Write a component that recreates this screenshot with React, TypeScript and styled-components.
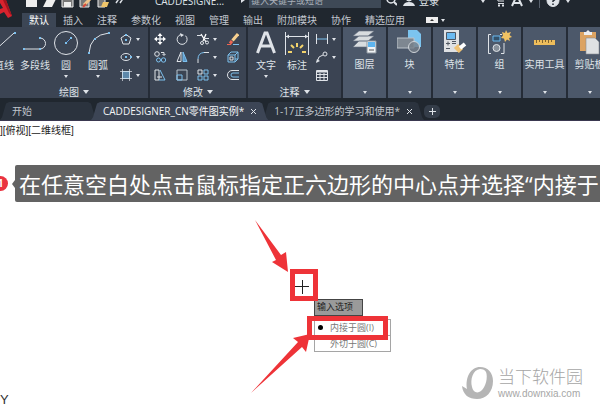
import React from "react";
import styled, { createGlobalStyle, css } from "styled-components";

const ink = "#dfe3e8";
const blue = "#7cc0ee";
const red = "#ee3338";

const GlobalStyle = createGlobalStyle`
  * { box-sizing: border-box; }
  html, body { margin: 0; background: #fff; }
  body { overflow: hidden; font-family: "Open Sans", "Noto Sans CJK SC", sans-serif; font-size: 10px; line-height: 14px; }
  button, input { font: inherit; color: inherit; background: none; border: 0; padding: 0; margin: 0; }
`;

const Page = styled.div`
  display: flex;
  flex-direction: column;
  min-height: 100vh;
  overflow: hidden;
  white-space: nowrap;
`;

const Header = styled.header`
  position: relative;
  background: #20272f;
  color: ${ink};
`;

const Logo = styled.svg`
  position: absolute;
  left: 0;
  top: 0;
  width: 14px;
  height: 19px;
`;

const TitleBar = styled.div`
  display: flex;
  align-items: flex-end;
  height: 13px;
  overflow: hidden;
`;

const TitleRow = styled.div`
  display: flex;
  flex: 1;
  align-items: center;
  height: 24px;
  flex-shrink: 0;
`;

const QuickAccess = styled.div`
  display: flex;
  gap: 5px;
  margin-left: 25px;
  width: 130px;
`;

const PlainButton = styled.button`
  display: flex;
  align-items: center;
  flex-shrink: 0;
`;

const DocName = styled.span`
  width: 86px;
`;

const SearchBox = styled.input`
  width: 132px;
  height: 14px;
  margin: 0 5px 0 4px;
  padding: 0 2px;
  background: #3e4956;
  font-size: 9px;
  &::placeholder { color: #a9b0b9; opacity: 1; }
`;

const Account = styled.div`
  display: flex;
  align-items: center;
  gap: 4px;
  margin: 0 10px 0 6px;
  width: 82px;
  & > :last-child { margin-left: auto; }
`;

const TitleTools = styled.div`
  display: flex;
  align-items: center;
  gap: 6px;
`;

const Divider = styled.span`
  width: 1px;
  height: 14px;
  background: #59626e;
`;

const MenuTabs = styled.nav`
  display: flex;
  height: 14px;
  padding-left: 22px;
`;

const MenuTab = styled.button<{ $active?: boolean }>`
  flex-shrink: 0;
  padding: 0 7px;
  line-height: 14px;
  color: #c3c8cf;
  ${(p) => p.$active && css`background: #3c4655; color: #fff;`}
`;

const RibbonToggle = styled(PlainButton)`
  margin-left: 14px;
  gap: 3px;
`;

const Ribbon = styled.div`
  display: flex;
  gap: 2px;
  height: 71px;
  background: #252c37;
`;

const Panel = styled.section<{ $width: number }>`
  display: flex;
  flex-direction: column;
  flex: 0 0 ${(p) => p.$width}px;
  min-width: 0;
  background: #3b4453;
`;

const PanelBody = styled.div<{ $end?: boolean }>`
  display: flex;
  justify-content: ${(p) => (p.$end ? "flex-end" : "flex-start")};
  height: 59px;
  padding: 3px 6px 0 4px;
`;

const PanelTitle = styled.button`
  display: flex;
  align-items: center;
  justify-content: center;
  gap: 4px;
  height: 12px;
  line-height: 12px;
`;

const Tool = styled.button<{ $width: number }>`
  display: flex;
  flex-direction: column;
  align-items: center;
  flex: 0 0 ${(p) => p.$width}px;
  line-height: 14px;
`;

const ToolLabel = styled.span`
  margin: 2px 0 3px;
`;

const SmallTools = styled.div<{ $columns: string; $left: number }>`
  display: grid;
  grid-template-columns: ${(p) => p.$columns};
  grid-auto-rows: 18px;
  margin-left: ${(p) => p.$left}px;
  flex-shrink: 0;
`;

const SmallTool = styled.button`
  display: flex;
  align-items: center;
  gap: 4px;
`;

const FoldedPanel = styled.button`
  display: flex;
  flex-direction: column;
  align-items: center;
  flex: 0 0 43px;
  min-width: 0;
  padding: 3px 0 4px;
  background: #4c586a;
  line-height: 14px;
  & > :last-child { margin-top: auto; }
`;

const FileTabs = styled.nav`
  display: flex;
  height: 23px;
  padding-top: 4px;
  border-bottom: 1px solid #3a3850;
`;

const FileTab = styled.div<{ $active?: boolean }>`
  position: relative;
  display: flex;
  align-items: center;
  gap: 6px;
  flex-shrink: 0;
  margin-right: -6px;
  padding: 0 11px 0 12px;
  color: ${(p) => (p.$active ? "#f2f4f6" : "#c0c5cc")};
  background: ${(p) => (p.$active ? "#3c4555" : "#2b333e")};
  z-index: ${(p) => (p.$active ? 1 : 0)};
  clip-path: polygon(0 100%, 2px 85%, 6px 8%, 9px 0, calc(100% - 9px) 0, calc(100% - 6px) 8%, calc(100% - 2px) 85%, 100% 100%);
`;

const HomeTab = styled(FileTab)`
  width: 97px;
`;

const AddTab = styled(PlainButton)`
  justify-content: center;
  align-self: center;
  width: 16px;
  height: 13px;
  margin-left: 6px;
  border-radius: 5px;
  background: #343d49;
`;

const Canvas = styled.main`
  position: relative;
  flex: 1;
  background: #fff;
`;

const ViewLabel = styled.div`
  padding-top: 3px;
  color: #222;
  font-family: "Liberation Sans", "Noto Sans CJK SC", sans-serif;
`;

const StepNote = styled.div`
  display: flex;
  align-items: center;
  margin-top: 27px;
`;

const StepNumber = styled.span`
  flex: 0 0 15px;
  height: 15px;
  margin-left: -7px;
  border-radius: 8px;
  background: #ea3340;
  color: #fff;
  font-weight: 700;
  line-height: 15px;
  text-align: center;
`;

const Pointer = styled.svg`
  flex: 0 0 3px;
  height: 8px;
  margin-left: 4px;
`;

const StepText = styled.p`
  flex: 1;
  height: 37px;
  margin: 0;
  padding-left: 4px;
  overflow: hidden;
  border-radius: 2px 0 0 2px;
  background: #636363;
  color: #fff;
  font-size: 22px;
  line-height: 38px;
`;

const Overlay = styled.svg`
  position: absolute;
  left: 250px;
  top: 95px;
  width: 70px;
  height: 180px;
`;

const Prompt = styled.div`
  position: absolute;
  left: 314px;
  top: 178px;
  width: 77px;
  color: #777;
  font-size: 9px;
`;

const PromptTitle = styled.div`
  width: 49px;
  height: 17px;
  margin-bottom: 3px;
  padding-left: 2px;
  border: 1px solid #444;
  background: #9a9a9a;
  color: #222;
  line-height: 14px;
`;

const Option = styled.button`
  display: flex;
  align-items: center;
  gap: 7px;
  width: 100%;
  height: 17px;
  padding-left: 3px;
  border: 1px solid #a5a5a5;
  & + & { margin-top: -1px; }
`;

const Dot = styled.span<{ $on?: boolean }>`
  width: 5px;
  height: 5px;
  border-radius: 3px;
  background: ${(p) => (p.$on ? "#000" : "transparent")};
`;

const Frame = styled.div<{ $x: number; $y: number; $w: number; $h: number }>`
  position: absolute;
  left: ${(p) => p.$x}px;
  top: ${(p) => p.$y}px;
  width: ${(p) => p.$w}px;
  height: ${(p) => p.$h}px;
  border: 5px solid ${red};
  pointer-events: none;
`;

const AxisName = styled.span`
  position: absolute;
  left: 0;
  bottom: 8px;
  color: #333;
  font-family: "Liberation Sans", sans-serif;
  font-size: 13px;
`;

const Watermark = styled.a`
  position: absolute;
  right: 17px;
  bottom: 15px;
  display: flex;
  align-items: center;
  gap: 4px;
  color: #a6a6a6;
  text-decoration: none;
`;

const SiteName = styled.span`
  display: block;
  font-size: 17px;
  font-weight: 300;
  line-height: 20px;
`;

const SiteAddress = styled.span`
  display: block;
  font-family: "Liberation Sans", sans-serif;
  line-height: 13px;
`;

type IconProps = { w?: number; h?: number; children: React.ReactNode };
const Icon = ({ w = 12, h = 12, children }: IconProps) => (
  <svg width={w} height={h} viewBox={`0 0 ${w} ${h}`} fill="none" stroke={ink} strokeWidth="1" aria-hidden="true">
    {children}
  </svg>
);

const Caret = ({ big }: { big?: boolean }) =>
  big ? (
    <Icon w={6} h={4}><path d="M0 0H6L3 4Z" fill={ink} stroke="none" /></Icon>
  ) : (
    <Icon w={4} h={3}><path d="M0 0H4L2 3Z" fill={ink} stroke="none" /></Icon>
  );

const Node = ({ x, y }: { x: number; y: number }) => (
  <rect x={x - 1} y={y - 1} width="2" height="2" fill={blue} stroke="none" />
);

const quick = [
  { name: "新建", art: <path d="M1 0H9L12 3V13H1Z" fill="#eee" stroke="none" /> },
  { name: "打开", art: <path d="M0 13L4 5H13L9 13Z" fill="#eee" stroke="none" /> },
  { name: "保存", art: <><path d="M1 1H12V13H1Z" fill="#777" stroke="#eee" /><path d="M3 8H10V13H3Z" fill="#eee" stroke="none" /></> },
  { name: "另存为", art: <><path d="M1 1H10V13H1Z" fill="#777" stroke="#eee" /><path d="M5 11L11 5" stroke="#f1c48a" strokeWidth="3" /><path d="M4 13L7 10" stroke="#d84a3a" strokeWidth="2" /></> },
  { name: "从移动设备打开", art: <><path d="M1 1H8V13H1Z" fill="#777" stroke="#eee" /><path d="M4 13L6 8H12L10 13Z" fill="#efc56a" stroke="none" /></> },
];

const small = {
  polygon: <><path d="M6 1.5L11 5L9 11H3L1 5Z" /><Node x={6} y={2} /><Node x={6} y={7} /></>,
  ellipse: <><ellipse cx="6" cy="6" rx="5" ry="3.5" /><Node x={6} y={6} /><Node x={11} y={6} /></>,
  hatch: <><rect x="2.5" y="2.5" width="7" height="7" fill="#5c88ab" stroke={blue} /><path d="M2.5 0V12M9.5 0V12M0 2.5H12M0 9.5H12" strokeWidth=".7" /></>,
  move: <><path d="M6 1V11M1 6H11" strokeWidth="1.5" /><path d="M6 0L8.500 3H3.500ZM6 12L3.500 9H8.500ZM0 6L3 3.500V8.500ZM12 6L9 8.500V3.500Z" fill="#fff" stroke="none" /></>,
  rotate: <><path d="M9.500 2.700A5 5 0 1 1 5 1.500" /><path d="M4 0L8 2L5 4Z" fill={ink} stroke="none" /></>,
  trim: <><path d="M4 1L9 9M9 1L6 8" stroke="#fff" strokeWidth="1.3" /><circle cx="5" cy="10" r="1.500" /><circle cx="10" cy="9.500" r="1.500" /><path d="M0 2.500H5M8 5.500H12" /></>,
  erase: <><path d="M5.500 7.500L11 1" stroke="#f6cf8f" strokeWidth="3" /><path d="M3 10.500L5 8" stroke="#ee6653" strokeWidth="3" /><path d="M0 11.500H4" stroke="#ee6653" /><path d="M6 11.500H12" stroke={blue} /></>,
  copy: <><circle cx="3" cy="3" r="2.300" /><circle cx="4.500" cy="9" r="2" stroke={blue} /><circle cx="9.500" cy="9" r="2.200" stroke={blue} /><path d="M7 1.500H10V4M8.500 3L10 4.500L11.500 3" /></>,
  mirror: <><path d="M5 1V10.500H1Z" /><path d="M7 1V10.500H11Z" fill="#5a96c6" stroke={blue} /></>,
  fillet: <><path d="M1 12V8" /><path d="M1 8Q1 2 7 1.500" stroke={blue} /><path d="M7 1.500H12" /></>,
  explode: <><path d="M1 4H8V11H1ZM4 1H11V8H8M1 4L4 1M8 4L11 1M8 11L11 8" stroke={blue} /><path d="M3 6H6V9H3Z" /></>,
  stretch: <><path d="M1 1H5V11H1Z" /><path d="M6 1L11 11H5" stroke={blue} /><path d="M3 8H8" /></>,
  scale: <><path d="M1 1H11V11H1Z" stroke="#b7c2cc" /><path d="M1 6H6V11H1Z" stroke={blue} /></>,
  array: <><path d="M1 1H5V5H1Z" /><path d="M7 1H11V5H7ZM1 7H5V11H1ZM7 7H11V11H7Z" stroke={blue} /></>,
  offset: <><path d="M12 1.500H5A4 4 0 0 0 5 10.500H12" /><path d="M12 4H6A2 2 0 0 0 6 8H12" stroke={blue} /></>,
  linear: <><path d="M.5 1V11M11.500 1V11" /><path d="M1 6H11" stroke={blue} /></>,
  leader: <><path d="M1 11L3 6L7 4" /><circle cx="9" cy="3" r="2" /><path d="M0 12L1 8L4 10Z" fill={ink} stroke="none" /></>,
  table: <><path d="M.5 1.500H11.500V11.500H.5ZM.5 5.500H11.500M.5 8.500H11.500M4 4V11M8 4V11" /><path d="M1 2.500H11" strokeWidth="2" /></>,
};

type SmallKey = keyof typeof small;
const Small = ({ icon, name, menu }: { icon: SmallKey; name: string; menu?: boolean }) => (
  <SmallTool aria-label={name}>
    <Icon>{small[icon]}</Icon>
    {menu && <Caret />}
  </SmallTool>
);

const folded = [
  { name: "图层", art: <><path d="M7 1H22L16 6H1ZM7 6H22L16 11H1ZM7 11H22L16 17H1Z" fill="#d8dcdf" stroke="#667180" strokeWidth=".6" /><path d="M15 11H24V23H15Z" fill="#f0f2f4" stroke="#8d969f" /><path d="M16 12H23V17H16Z" fill="#5eb4ee" stroke="none" /><path d="M17 20H22" stroke="#555" /></> },
  { name: "块", art: <><path d="M11 0H20L24 4V17H11Z" fill="#7cc4ef" stroke="none" /><path d="M0 8H17V18H0Z" fill="#7e8791" stroke="#bcc3ca" /><circle cx="17" cy="17" r="5.500" fill="#76808a" fillOpacity=".8" stroke="#cfd4d9" /></> },
  { name: "特性", art: <><path d="M2 0H17V22H2Z" fill="#dfe1e3" stroke="none" /><path d="M4.500 2.500H13.500V9.500H4.500Z" fill="#6bbaf0" stroke="#4b5665" /><path d="M4 13.500H8M6 11.500V15.500M4 18.500H8M10 13.500H14M10 11.500H14" stroke="#505862" /><path d="M14 16L19 21" stroke="#efc274" strokeWidth="6" /><path d="M18 18L23 14" stroke="#fff" strokeWidth="4" /></> },
  { name: "组", art: <><path d="M4 4.500H1.500V23.500H4M13 4.500H15M14 23.500H17V13" /><path d="M6 6H13V11H6Z" stroke="#68b8ee" fill="#34516a" /><circle cx="9.500" cy="18" r="3.500" fill="#88919b" /><path d="M19 0L20.500 3L24 2L22.500 5L25 7L22 8L23 11L20 9.500L18 12L17 8.500L14 8L16 5.500L15 2L18 3Z" fill="#f2c363" stroke="none" /></> },
  { name: "实用工具", art: <><path d="M2 10H23V15H2Z" fill="#eebd5b" stroke="none" /><path d="M4.500 10V13M7.500 10V12M10.500 10V13M13.500 10V12M16.500 10V13M19.500 10V12" stroke="#80642f" /></> },
  { name: "剪贴板", art: <><path d="M3 2H19V21H3Z" fill="#dca362" stroke="none" /><path d="M7 2H9L11 0L13 2H15V5H7Z" fill="#eceef0" stroke="none" /><path d="M9 8H18L22 12V24H9Z" fill="#dfe1e3" stroke="#8a8f96" strokeWidth=".6" /></> },
];

const menus = ["插入", "注释", "参数化", "视图", "管理", "输出", "附加模块", "协作", "精选应用"];

const Close = () => (
  <PlainButton aria-label="关闭">
    <Icon w={7} h={7}><path d="M1 1L6 6M6 1L1 6" /></Icon>
  </PlainButton>
);

export default function App() {
  return (
    <Page lang="zh-CN">
      <GlobalStyle />
      <Header>
        <TitleBar>
          <TitleRow>
            <QuickAccess>
              {quick.map((q) => (
                <PlainButton key={q.name} aria-label={q.name}><Icon w={13} h={14}>{q.art}</Icon></PlainButton>
              ))}
              <PlainButton aria-label="更多"><Icon w={8} h={14}><path d="M1 4L3 6L1 9M5 4L7 6L5 9" strokeWidth="1.500" /></Icon></PlainButton>
            </QuickAccess>
            <DocName>CADDESIGNE...</DocName>
            <Icon w={4} h={8}><path d="M0 0L4 3L0 6Z" fill={ink} stroke="none" /></Icon>
            <SearchBox aria-label="搜索" placeholder="键入关键字或短语" />
            <PlainButton aria-label="查找"><Icon w={11} h={14}><circle cx="5" cy="5" r="4" strokeWidth="1.500" /><path d="M8 8L11 11" strokeWidth="2" /></Icon></PlainButton>
            <Account>
              <Icon w={12} h={14}><circle cx="6" cy="4" r="3" fill={ink} /><path d="M0 12Q1 8 6 8T12 12Z" fill={ink} stroke="none" /></Icon>
              <PlainButton>登录</PlainButton>
              <Caret />
            </Account>
            <TitleTools>
              <PlainButton aria-label="商店"><Icon w={10} h={14}><path d="M0 1H2L3 7H9M2 3.500H9M3 9.500H9" /><path d="M3 11.500H5M7 11.500H9" strokeWidth="2" /></Icon></PlainButton>
              <PlainButton aria-label="应用"><Icon w={12} h={14}><path d="M6 1L1 12M6 1L11 12M3 9H9" strokeWidth="2" /></Icon></PlainButton>
              <Caret />
              <Divider />
              <PlainButton aria-label="帮助"><Icon w={14} h={14}><circle cx="7" cy="6.500" r="6" fill="#dfe3e8" /><path d="M5 5Q5 3 7 3T9 5Q9 6 7 7V8M7 9.500V11" stroke="#20272f" strokeWidth="1.500" /></Icon></PlainButton>
              <Caret />
            </TitleTools>
          </TitleRow>
        </TitleBar>
        <MenuTabs>
          <MenuTab $active>默认</MenuTab>
          {menus.map((m) => <MenuTab key={m}>{m}</MenuTab>)}
          <RibbonToggle aria-label="功能区显示">
            <Icon w={12} h={8}><path d="M0 1H12V7H0Z" fill="#eee" stroke="none" /><path d="M4 5H8L6 3Z" fill="#333" stroke="none" /></Icon>
            <Caret />
          </RibbonToggle>
        </MenuTabs>
        <Logo viewBox="0 0 14 19" aria-hidden="true">
          <path d="M0 0H6L12 16L8 18L4 12L0 14V9L3 8L0 3Z" fill="#d9232e" />
          <path d="M3 0L9 13L12 16L6 0Z" fill="#a3151f" />
        </Logo>
        <Ribbon>
          <Panel $width={148}>
            <PanelBody $end>
              <Tool $width={30}>
                <Icon w={26} h={26}><path d="M1 23L23 3" /><Node x={2} y={22} /><Node x={24} y={3} /></Icon>
                <ToolLabel>直线</ToolLabel>
              </Tool>
              <Tool $width={32}>
                <Icon w={26} h={26}><path d="M2 19H18A5.500 5.500 0 0 0 18 8" /><Node x={2} y={19} /><Node x={18} y={8} /><Node x={18} y={19} /></Icon>
                <ToolLabel>多段线</ToolLabel>
              </Tool>
              <Tool $width={30}>
                <Icon w={26} h={26}><circle cx="13" cy="13" r="11.500" /><path d="M13 13L18 8" stroke="#5b9be0" /><Node x={13} y={13} /><Node x={18} y={8} /></Icon>
                <ToolLabel>圆</ToolLabel>
                <Caret />
              </Tool>
              <Tool $width={34}>
                <Icon w={26} h={26}><path d="M4 23Q5 5 24 3" /><Node x={4} y={23} /><Node x={10} y={9} /><Node x={24} y={3} /></Icon>
                <ToolLabel>圆弧</ToolLabel>
                <Caret />
              </Tool>
              <SmallTools $columns="22px" $left={5}>
                <Small icon="polygon" name="多边形" menu />
                <Small icon="ellipse" name="椭圆" menu />
                <Small icon="hatch" name="图案填充" menu />
              </SmallTools>
            </PanelBody>
            <PanelTitle>绘图 <Caret big /></PanelTitle>
          </Panel>
          <Panel $width={96}>
            <PanelBody>
              <SmallTools $columns="22px 21px 30px 12px" $left={0}>
                <Small icon="move" name="移动" />
                <Small icon="rotate" name="旋转" />
                <Small icon="trim" name="修剪" menu />
                <Small icon="erase" name="删除" />
                <Small icon="copy" name="复制" />
                <Small icon="mirror" name="镜像" />
                <Small icon="fillet" name="圆角" menu />
                <Small icon="explode" name="分解" />
                <Small icon="stretch" name="拉伸" />
                <Small icon="scale" name="缩放" />
                <Small icon="array" name="阵列" menu />
                <Small icon="offset" name="偏移" />
              </SmallTools>
            </PanelBody>
            <PanelTitle>修改 <Caret big /></PanelTitle>
          </Panel>
          <Panel $width={93}>
            <PanelBody>
              <Tool $width={28}>
                <Icon w={22} h={26}><path d="M2.500 23L10 3H12L19.500 23M6 16H16" strokeWidth="3" /></Icon>
                <ToolLabel>文字</ToolLabel>
                <Caret />
              </Tool>
              <Tool $width={34}>
                <Icon w={26} h={26}><path d="M1.500 2V25M24.500 2V25M2 6.500H24" /><path d="M2 6.500L5 4.500V8.500ZM24 6.500L21 4.500V8.500Z" fill={ink} stroke="none" /><path d="M13 13V17M7 15L10 18M19 15L16 18M4 22H8M18 22H22" stroke="#f3d36b" strokeWidth="2" /></Icon>
                <ToolLabel>标注</ToolLabel>
              </Tool>
              <SmallTools $columns="20px" $left={2}>
                <Small icon="linear" name="线性" menu />
                <Small icon="leader" name="引线" menu />
                <Small icon="table" name="表格" />
              </SmallTools>
            </PanelBody>
            <PanelTitle>注释 <Caret big /></PanelTitle>
          </Panel>
          {folded.map((f) => (
            <FoldedPanel key={f.name}>
              <Icon w={25} h={25}>{f.art}</Icon>
              <ToolLabel>{f.name}</ToolLabel>
              <Caret />
            </FoldedPanel>
          ))}
        </Ribbon>
        <FileTabs>
          <HomeTab>开始</HomeTab>
          <FileTab $active>CADDESIGNER_CN零件图实例* <Close /></FileTab>
          <FileTab>1-17正多边形的学习和使用* <Close /></FileTab>
          <AddTab aria-label="新建图形"><Icon w={7} h={7}><path d="M3.500 0V7M0 3.500H7" /></Icon></AddTab>
        </FileTabs>
      </Header>
      <Canvas>
        <ViewLabel>][俯视][二维线框]</ViewLabel>
        <StepNote>
          <StepNumber>1</StepNumber>
          <Pointer viewBox="0 0 3 8"><path d="M3 0V8L0 4Z" fill="#636363" /></Pointer>
          <StepText>在任意空白处点击鼠标指定正六边形的中心点并选择“内接于</StepText>
        </StepNote>
        <Prompt>
          <PromptTitle>输入选项</PromptTitle>
          <Option><Dot $on />内接于圆(I)</Option>
          <Option><Dot />外切于圆(C)</Option>
        </Prompt>
        <Frame $x={290} $y={148} $w={28} $h={32} />
        <Frame $x={307} $y={195} $w={81} $h={24} />
        <Overlay viewBox="250 216 70 180" aria-hidden="true">
          <path d="M255 220L281 255L286 252L288 272L272 262L276 260Z" fill={red} />
          <path d="M251 393L298 342L293 338L310 334L306 352L302 347Z" fill={red} />
          <path d="M302.500 280V294M295 286.500H309" stroke="#222" />
        </Overlay>
        <AxisName>Y</AxisName>
        <Watermark href="#">
          <svg width="32" height="33" viewBox="0 0 32 33" aria-hidden="true">
            <path fillRule="evenodd" fill="#b5b5b5" d="M18 0C26 0 31 6 31 14C31 25 24 32 15 32C7 32 1 28 0 19L5 22C3 10 9 0 18 0ZM18 2C11 3 8 12 10 20C11 25 15 27 19 24C24 20 26 10 24 5C23 3 21 2 18 2Z" />
          </svg>
          <span>
            <SiteName>当下软件园</SiteName>
            <SiteAddress>www.downxia.com</SiteAddress>
          </span>
        </Watermark>
      </Canvas>
    </Page>
  );
}
